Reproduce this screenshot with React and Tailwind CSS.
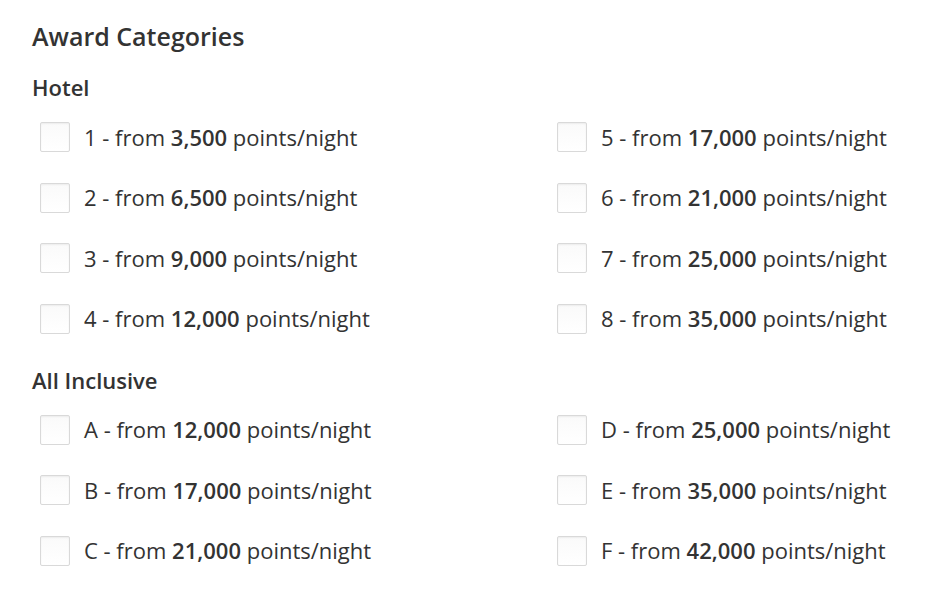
import React from 'react';

const hotel = [
  ['1', '3,500'],
  ['5', '17,000'],
  ['2', '6,500'],
  ['6', '21,000'],
  ['3', '9,000'],
  ['7', '25,000'],
  ['4', '12,000'],
  ['8', '35,000'],
];

const allInclusive = [
  ['A', '12,000'],
  ['D', '25,000'],
  ['B', '17,000'],
  ['E', '35,000'],
  ['C', '21,000'],
  ['F', '42,000'],
];

const Option = ({ label, points }) => (
  <label className="flex items-center h-[60.5px] cursor-pointer">
    <span className="w-[30px] h-[30px] rounded-[2px] border border-[#d9d9d9] bg-gradient-to-b from-[#fafafa] to-white shadow-[inset_0_1px_2px_rgba(0,0,0,0.06)]" />
    <span className="ml-[14px] text-[22px] text-[#333333]">
      {label} - from <span className="font-semibold">{points}</span> points/night
    </span>
  </label>
);

const Group = ({ title, items }) => (
  <div>
    <h3 className="text-[22px] leading-[28px] font-semibold text-[#333333]">{title}</h3>
    <div className="grid grid-cols-[517px_1fr] pl-[8px] mt-[5.75px]">
      {items.map(([l, p]) => (
        <Option key={l} label={l} points={p} />
      ))}
    </div>
  </div>
);

export default function App() {
  return (
    <div className="min-h-screen bg-white pl-[32px] pt-[20px]" style={{ fontFamily: '"Open Sans", sans-serif' }}>
      <h2 className="text-[25px] leading-[32px] font-semibold text-[#333333]">Award Categories</h2>
      <div className="mt-[21px]">
        <Group title="Hotel" items={hotel} />
      </div>
      <div className="mt-[16.75px]">
        <Group title="All Inclusive" items={allInclusive} />
      </div>
    </div>
  );
}
